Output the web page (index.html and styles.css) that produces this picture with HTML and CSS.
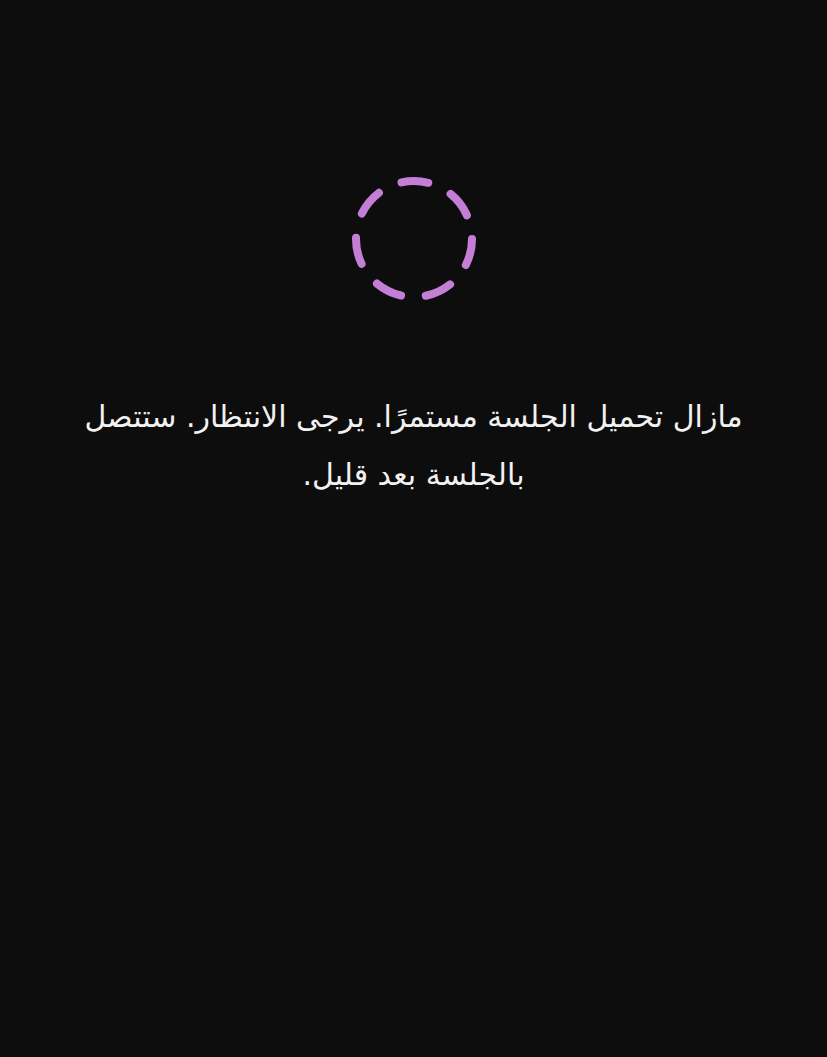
FILE: index.html
```html
<!DOCTYPE html>
<html lang="ar" dir="rtl">
<head>
<meta charset="utf-8">
<link rel="stylesheet" href="styles.css">
</head>
<body>
<main class="screen">
  <div class="spinner">
    <svg width="130" height="130" viewBox="0 0 130 130">
      <circle cx="65" cy="65" r="58" fill="none" stroke="#c47ed6" stroke-width="8" stroke-linecap="round" stroke-dasharray="27 25.06"/>
    </svg>
  </div>
  <p class="message">مازال تحميل الجلسة مستمرًا. يرجى الانتظار. ستتصل بالجلسة بعد قليل.</p>
</main>
</body>
</html>
```

FILE: styles.css
```css
html, body {
  margin: 0;
  padding: 0;
  background: #0d0d0d;
}
.screen {
  min-height: 1057px;
  display: flex;
  flex-direction: column;
  align-items: center;
  padding-top: 174px;
  box-sizing: border-box;
}
.spinner {
  width: 130px;
  height: 130px;
  margin-right: -1px;
}
.spinner svg {
  display: block;
}
.message {
  margin: 84px 0 0;
  padding: 0 60px;
  font-family: "DejaVu Sans", sans-serif;
  font-size: 30px;
  line-height: 58px;
  color: #f2f2f2;
  text-align: center;
  direction: rtl;
}
```
